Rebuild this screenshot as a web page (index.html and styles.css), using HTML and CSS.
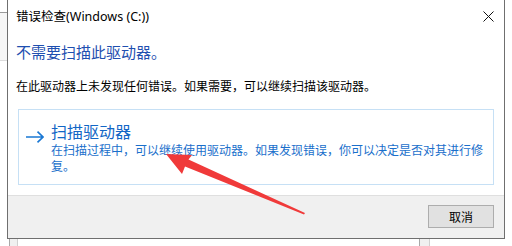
FILE: index.html
```html
<!DOCTYPE html>
<html lang="zh-CN">
<head>
<meta charset="utf-8">
<title>错误检查</title>
<link rel="stylesheet" href="styles.css">
</head>
<body>
<div class="screen">
  <div class="left-strip"><div class="bg-window"></div></div>
  <div class="dialog">
    <div class="titlebar">
      <span class="title">错误检查(Windows (C:))</span>
      <svg class="close" width="11" height="11" viewBox="0 0 11 11"><path d="M0.5 0.5 L10.5 10.5 M10.5 0.5 L0.5 10.5" stroke="#111" stroke-width="1" fill="none"/></svg>
    </div>
    <div class="content">
      <h1 class="main">不需要扫描此驱动器。</h1>
      <p class="body-text">在此驱动器上未发现任何错误。如果需要，可以继续扫描该驱动器。</p>
      <div class="cmd">
        <svg class="cmd-arrow" width="18" height="12" viewBox="0 0 18 12"><path d="M0 6 H17 M11.5 0.7 L17 6 L11.5 11.3" stroke="#1a78d4" stroke-width="1.6" fill="none"/></svg>
        <div class="cmd-text">
          <div class="cmd-title">扫描驱动器</div>
          <div class="cmd-desc">在扫描过程中，可以继续使用驱动器。如果发现错误，你可以决定是否对其进行修复。</div>
        </div>
      </div>
    </div>
    <div class="footer"><button class="btn">取消</button></div>
  </div>
</div>
<div class="below">
  <div class="stub stub-a"></div>
  <div class="stub stub-b"></div>
</div>
<svg class="red-arrow" width="512" height="246" viewBox="0 0 512 246">
  <polygon points="166,154 192,155 188.5,159.5 305,213 304,214.5 185,166.5 182,174" fill="#f03a3a"/>
</svg>
</body>
</html>
```
FILE: styles.css
```css
* { box-sizing: border-box; }
html, body { margin: 0; padding: 0; }
body {
  width: 512px;
  height: 246px;
  overflow: hidden;
  background: #ffffff;
  font-family: "Noto Sans", "Noto Sans CJK SC", sans-serif;
  color: #000;
  position: relative;
}
.screen {
  display: flex;
  height: 239px;
}
.left-strip {
  width: 7px;
  flex: none;
}
.bg-window {
  margin-top: 12px;
  height: 49px;
  border-top: 1px solid #9a9a9a;
  border-bottom: 1px solid #dcdcdc;
  background: #f6f6f6;
}
.dialog {
  width: 498px;
  height: 239px;
  flex: none;
  border: 1px solid #6f6f6f;
  border-top: none;
  background: #fff;
  display: flex;
  flex-direction: column;
}
.titlebar {
  height: 33px;
  display: flex;
  align-items: center;
  justify-content: space-between;
  padding: 0 10px 0 8px;
}
.title {
  font-size: 12.5px;
  line-height: 17px;
}
.close { display: block; margin-top: -1px; }
.content {
  padding: 0 10px 0 8px;
  margin-bottom: 10px;
}
.main {
  margin: 9px 0 0 0;
  font-size: 15px;
  line-height: 20px;
  font-weight: normal;
  color: #1e4fb0;
  font-family: "Noto Sans CJK SC", sans-serif;
}
.body-text {
  margin: 16px 0 0 0;
  font-size: 12px;
  line-height: 16px;
  font-family: "Noto Sans CJK SC", sans-serif;
}
.cmd {
  margin: 15px 0 0 2px;
  height: 76px;
  border: 1px solid #c6e0f5;
  display: flex;
  align-items: flex-start;
  padding: 11px 0 0 7px;
  gap: 7px;
}
.cmd-arrow { display: block; margin-top: 10px; flex: none; }
.cmd-text { flex: none; width: 440px; }
.cmd-title {
  font-size: 16px;
  line-height: 20px;
  color: #1266c6;
  font-family: "Noto Sans CJK SC", sans-serif;
}
.cmd-desc {
  margin-top: 1px;
  font-size: 12px;
  line-height: 16px;
  color: #1a6fcb;
  font-family: "Noto Sans CJK SC", sans-serif;
}
.footer {
  flex: 1;
  border-top: 1px solid #dfdfdf;
  background: #f0f0f0;
  display: flex;
  justify-content: flex-end;
  align-items: flex-start;
  padding: 9px 10px 0 0;
}
.btn {
  width: 66px;
  height: 23px;
  border: 1px solid #adadad;
  background: #e1e1e1;
  font-family: "Noto Sans CJK SC", sans-serif;
  font-size: 12px;
  line-height: 16px;
  color: #000;
  padding: 0;
}
.below {
  display: flex;
  height: 7px;
}
.stub {
  height: 7px;
  border-left: 1px solid #a8a8a8;
  border-right: 1px solid #d0d0d0;
  background: #f0f0f0;
}
.stub-a { margin-left: 9px; width: 9px; }
.stub-b { margin-left: 401px; width: 11px; }
.red-arrow {
  position: absolute;
  left: 0;
  top: 0;
  pointer-events: none;
}
```
